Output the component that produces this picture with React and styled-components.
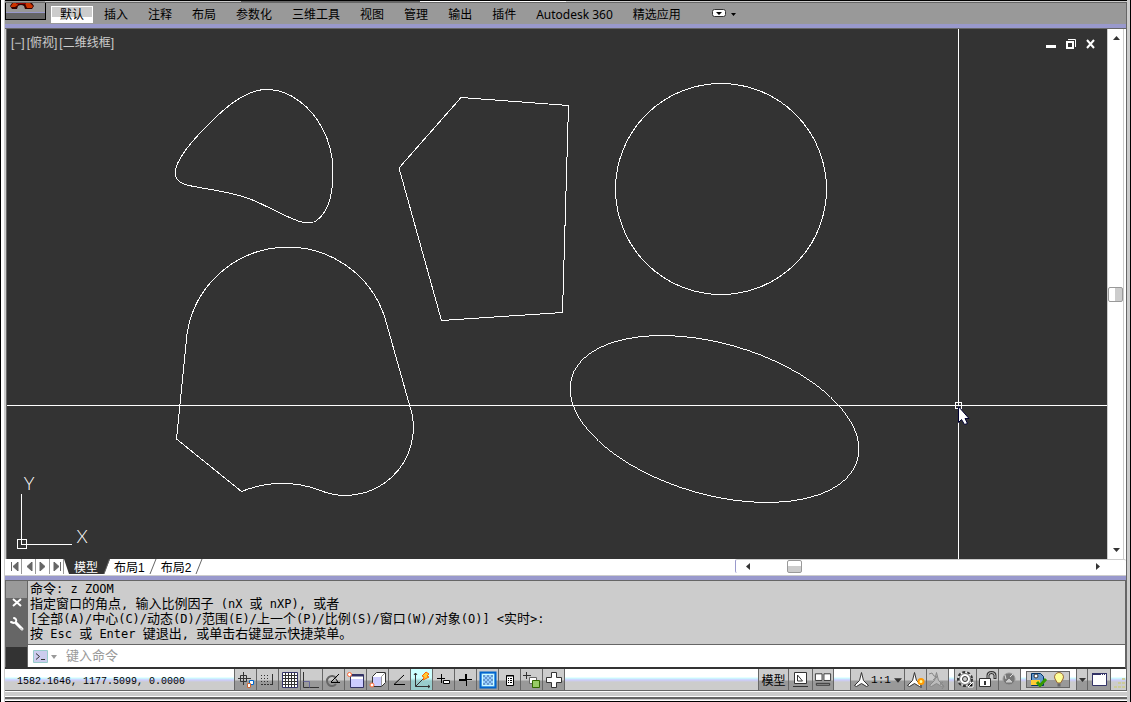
import { useState } from "react";
import styled, { createGlobalStyle } from "styled-components";

const GlobalStyle = createGlobalStyle`
  * {
    box-sizing: border-box;
  }
  body {
    margin: 0;
    background: #ccc;
    font-family: "Noto Sans", "Noto Sans CJK SC", sans-serif;
    font-size: 12px;
    color: #000;
  }
  button {
    border: none;
    padding: 0;
    margin: 0;
    background: transparent;
    font: inherit;
    color: inherit;
    cursor: pointer;
  }
  svg {
    display: block;
  }
`;

const Frame = styled.div`
  display: flex;
  flex-direction: column;
  min-height: 100vh;
  border-left: 1px solid #000;
  border-right: 1px solid #000;
  padding: 0 3px 0 4px;
  background: linear-gradient(to right, #fff 3px, #ccc 3px);
`;

const TopEdge = styled.div`
  height: 3px;
  border-top: 1px solid #000;
  border-bottom: 1px solid #666;
  background: linear-gradient(
    to right,
    #999 40px,
    #ccc 40px,
    #ccc 21%,
    #666 21%,
    #666 37%,
    #fff 37%,
    #fff 50%,
    #ccc 50%
  );
`;

const Shell = styled.div`
  flex: 1;
  display: flex;
  flex-direction: column;
  border-right: 1px solid #666;
`;

const Ribbon = styled.header`
  display: flex;
  align-items: flex-start;
  height: 21px;
  background: #999;
`;

const AppButton = styled.button`
  display: flex;
  align-items: flex-start;
  width: 41px;
  height: 17px;
  margin-right: 4px;
  border: 1px solid #000;
  border-top: none;
  background: linear-gradient(#999 9px, #99c 9px, #99c 10px, #666 10px);
`;

const RibbonTabs = styled.nav`
  display: flex;
  padding-top: 3px;
`;

const RibbonTab = styled.button`
  height: 17px;
  padding: 0 10px;
  line-height: 16px;
  white-space: nowrap;
  background: ${(props) =>
    props.$active ? "linear-gradient(#ccc 10px, #fff 10px)" : "transparent"};
  &:first-child {
    border: 1px solid #fff;
    padding: 0 8px;
    line-height: 14px;
    margin: 0 1px;
  }
`;

const RibbonToggle = styled.button`
  margin: 5px 0 0 20px;
`;

const LilacBar = styled.div`
  height: 5px;
  background: #99c;
  border-bottom: 1px solid #666;
`;

const Workspace = styled.div`
  flex: 1;
  display: flex;
  min-height: 320px;
  padding-left: 1px;
`;

const Viewport = styled.main`
  position: relative;
  flex: 1;
  display: flex;
  min-width: 0;
  border-left: 1px solid #666;
  background: #333;
  cursor: none;
`;

const Drawing = styled.svg`
  flex: 1;
  min-width: 0;
  fill: none;
  stroke: #fff;
  shape-rendering: crispEdges;
`;

const AxisLabel = styled.text`
  font-family: Lato, sans-serif;
  font-weight: 300;
  font-size: 18px;
  fill: #fff;
  stroke: none;
  text-anchor: middle;
`;

const ViewportControls = styled.div`
  position: absolute;
  top: 6px;
  left: 4px;
  display: flex;
  gap: 2px;
  color: #ccc;
  font-family: "Liberation Sans", "Noto Sans CJK SC", sans-serif;
  line-height: 16px;
`;

const WindowControls = styled.div`
  position: absolute;
  top: 9px;
  right: 10px;
  display: flex;
  gap: 8px;
`;

const VerticalScroll = styled.div`
  display: flex;
  flex-direction: column;
  align-items: flex-start;
  justify-content: space-between;
  width: 19px;
  padding: 6px 0;
  border-left: 1px solid #ccc;
  background: linear-gradient(to right, #fff 15px, #ccc 15px, #ccc 16px, #fff 16px);
`;

const VerticalArrow = styled.button`
  padding-left: 5px;
`;

const VerticalThumb = styled.div`
  width: 15px;
  height: 15px;
  border: 1px solid #999;
  border-radius: 2px;
  background: linear-gradient(to right, #fff 6px, #ccc 6px);
`;

const LayoutBar = styled.div`
  display: flex;
  height: 17px;
  padding-left: 3px;
  border-bottom: 1px solid #ccc;
  background: #fff;
`;

const PageButton = styled.button`
  display: flex;
  align-items: center;
  justify-content: center;
  width: 14px;
  height: 15px;
  border-right: 1px solid #999;
`;

const LayoutTabs = styled.div`
  display: flex;
  height: 15px;
`;

const LayoutTab = styled.button`
  height: 15px;
  line-height: 16px;
  padding: 1px 4px 0;
  white-space: nowrap;
  font-family: "Liberation Sans", "Noto Sans CJK SC", sans-serif;
  color: ${(props) => (props.$active ? "#fff" : "#000")};
  background: ${(props) => (props.$active ? "#333" : "#fff")};
`;

const HorizontalScroll = styled.div`
  display: flex;
  align-items: center;
  width: 35%;
  height: 14px;
  margin-left: auto;
  padding: 0 25px 0 9px;
  border-left: 1px solid #99c;
  border-radius: 2px;
  border-top: 1px solid #ccc;
`;

const HorizontalThumb = styled.div`
  width: 15px;
  height: 13px;
  margin: 0 auto 0 35px;
  border: 1px solid #999;
  border-radius: 2px;
  background: linear-gradient(#fff 5px, #ccc 5px);
`;

const CommandPanel = styled.section`
  display: flex;
  border-right: 1px solid #666;
  border-bottom: 2px solid #333;
`;

const CommandGrip = styled.div`
  display: flex;
  flex-direction: column;
  align-items: center;
  width: 23px;
  padding-top: 17px;
  border: 1px solid #666;
  border-top: none;
  border-bottom: none;
  background: linear-gradient(#999 17px, #666 17px, #666 66px, #333 66px);
`;

const GripButton = styled.button`
  padding-bottom: 8px;
`;

const CommandBody = styled.div`
  flex: 1;
  min-width: 0;
`;

const CommandHistory = styled.div`
  height: 64px;
  padding: 1px 0 0 2px;
  border-bottom: 1px solid #666;
  background: #ccc;
  overflow: hidden;
`;

const HistoryLine = styled.p`
  margin: 0;
  font-family: "Liberation Mono", "Noto Sans CJK SC", monospace;
  font-size: 13px;
  line-height: 15px;
  height: 15px;
  white-space: pre;
`;

const Latin = styled.span`
  font-family: "DejaVu Sans Mono", monospace;
  font-size: 12px;
  line-height: 14px;
`;

const PromptRow = styled.label`
  display: flex;
  align-items: center;
  height: 22px;
  padding-left: 5px;
  background: #fff;
`;

const PromptInput = styled.input`
  flex: 1;
  min-width: 0;
  height: 20px;
  margin-left: 9px;
  padding: 0 0 2px;
  border: none;
  outline: none;
  background: transparent;
  font-family: "DejaVu Sans Mono", "Noto Sans CJK SC", monospace;
  font-size: 13px;
  &::placeholder {
    color: #999;
    opacity: 1;
  }
`;

const StatusBar = styled.footer`
  display: flex;
  height: 22px;
  border-bottom: 1px solid #666;
  background: linear-gradient(#fff 8px, #cff 9px, #ccf 11px, #ccc 13px);
`;

const Coordinates = styled.output`
  width: 230px;
  padding-left: 12px;
  border-right: 1px solid #666;
  font-family: "Liberation Mono", monospace;
  font-size: 10px;
  line-height: 26px;
  white-space: nowrap;
`;

const StatusButton = styled.button`
  display: flex;
  align-items: center;
  justify-content: center;
  flex: none;
  width: ${(props) => props.$width || 22}px;
  height: 21px;
  border-right: 1px solid #666;
  white-space: nowrap;
  background: ${(props) =>
    props.$on
      ? "linear-gradient(#cff 9px, #9cc 12px)"
      : "linear-gradient(#ccc 11px, #999 12px)"};
`;

const ScaleText = styled.span`
  margin: 0 3px 0 1px;
  font-family: "Liberation Mono", monospace;
  font-size: 11px;
`;

const StatusSpacer = styled.div`
  flex: ${(props) => (props.$width ? "none" : 1)};
  width: ${(props) => props.$width || 0}px;
  border-right: 1px solid #666;
`;

const Tray = styled.div`
  display: flex;
  align-items: center;
  width: 56px;
  padding-left: 5px;
  border-right: 1px solid #666;
`;

const TrayInner = styled.div`
  display: flex;
  gap: 4px;
  width: 44px;
  height: 17px;
  padding: 0 3px;
  border: 1px solid #666;
  background: linear-gradient(#ccc 8px, #999 8px);
`;

const BottomEdge = styled.div`
  height: 11px;
  border-bottom: 1px solid #000;
  background: linear-gradient(
    #fff 1px,
    #ccc 1px,
    #ccc 5px,
    #fff 5px,
    #fff 6px,
    #666 6px,
    #666 8px,
    #ccc 8px,
    #ccc 9px,
    #fff 9px
  );
`;

const Icon = ({ children, width = 21, height = 20, ...rest }) => (
  <svg
    width={width}
    height={height}
    viewBox={`0 0 ${width} ${height}`}
    fill="none"
    stroke="#333"
    aria-hidden="true"
    {...rest}
  >
    {children}
  </svg>
);

const arrowShapes = {
  up: "M0 5h7L3.5 1z",
  down: "M0 2h7L3.5 6z",
  left: "M5 0v7L1 3.5z",
  right: "M2 0v7l4-3.5z",
};

const Arrow = ({ dir, size = 7 }) => (
  <svg width={size} height={size} viewBox="0 0 7 7" aria-hidden="true">
    <path d={arrowShapes[dir]} fill="#333" />
  </svg>
);

const ribbonTabs = [
  "默认", "插入", "注释", "布局", "参数化", "三维工具",
  "视图", "管理", "输出", "插件", "Autodesk 360", "精选应用",
];

const history = [
  "命令: z ZOOM",
  "指定窗口的角点, 输入比例因子 (nX 或 nXP), 或者",
  "[全部(A)/中心(C)/动态(D)/范围(E)/上一个(P)/比例(S)/窗口(W)/对象(O)] <实时>:",
  "按 Esc 或 Enter 键退出, 或单击右键显示快捷菜单。",
];

const pageIcons = [
  { label: "第一个", path: "M1.5 0v9M8 0v9L3 4.5z" },
  { label: "上一个", path: "M8 0v9L3 4.5z" },
  { label: "下一个", path: "M2 0v9l5-4.5z" },
  { label: "最后一个", path: "M2 0v9l5-4.5zM8.5 0v9" },
];

const drawingAids = [
  {
    label: "推断约束",
    icon: (
      <>
        <path d="M3 8.5h13M8.5 2v13M5.5 5.5h6v6h-6z" />
        <path d="M14.5 10.5h4v4h-4z" stroke="#06c" fill="#fff" />
        <path d="M12.5 13.5h3v4h-3z" stroke="#c63" fill="#fff" />
      </>
    ),
  },
  {
    label: "捕捉模式",
    icon: (
      <>
        <path d="M4 5.5h9M4 8.5h9M4 11.5h9" strokeDasharray="1 2" />
        <path d="M4 14.5h11" strokeDasharray="2 1" />
        <path d="M15.5 4v11" />
      </>
    ),
  },
  {
    label: "栅格显示",
    icon: (
      <>
        <path d="M3.5 2.5h15v15h-15z" fill="#fff" stroke="#336" />
        <path d="M6.5 3v14M9.5 3v14M12.5 3v14M15.5 3v14M4 5.5h14M4 8.5h14M4 11.5h14M4 14.5h14" />
      </>
    ),
  },
  {
    label: "正交模式",
    icon: (
      <>
        <path d="M2.5 2v15.5H18" />
        <path d="M2.5 11.5h6v6" stroke="#669" />
      </>
    ),
  },
  {
    label: "极轴追踪",
    icon: (
      <>
        <path d="M13 8a5 5 0 1 0 0 6" stroke="#666" strokeWidth="2" />
        <path d="M8 12.5h9M8 12l8-8M12.5 9q2 1 2 3" stroke="#000" />
      </>
    ),
  },
  {
    label: "对象捕捉",
    icon: (
      <>
        <path d="M5.5 4.5h13v13h-13z" fill="#ccf" stroke="#336" />
        <path d="M6 5h12v4H6z" fill="#fff" stroke="none" />
        <path d="M5 5.5h13" stroke="#336" strokeWidth="2" />
        <circle cx="4.5" cy="4.5" r="2" fill="#fff" stroke="#f63" />
      </>
    ),
  },
  {
    label: "三维对象捕捉",
    icon: (
      <>
        <path d="M5.5 6.5l4-4h9v10l-4 4h-9z" fill="#fff" />
        <path d="M6 7h8v9H6z" fill="#ccf" stroke="none" />
        <path d="M14.5 16V6.5l4-4" stroke="#999" />
        <circle cx="5" cy="15" r="2" fill="#fff" stroke="#f63" />
      </>
    ),
  },
  {
    label: "对象捕捉追踪",
    icon: <path d="M15 5L5 14.5h11" stroke="#000" />,
  },
  {
    label: "允许/禁止动态 UCS",
    on: true,
    icon: (
      <>
        <path d="M4.5 3v13.5H19M3 5l1.5-2L6 5M17 15l2 1.5-2 1.5M4.5 16.5L13 8" />
        <path d="M15 2l3 2-2 2 2 1-6 3 1-3-2-1z" fill="#fc3" stroke="#f60" />
      </>
    ),
  },
  {
    label: "动态输入",
    icon: (
      <>
        <path d="M4 8.5h8M8.5 4v9" stroke="#000" />
        <path d="M10.5 10.5h6v3h-6z" fill="#fff" stroke="#000" />
      </>
    ),
  },
  {
    label: "显示/隐藏线宽",
    icon: (
      <>
        <path d="M4 10h8M11 10V4" stroke="#000" strokeWidth="2" />
        <path d="M11.5 9v7M11 9.5h6" stroke="#000" />
      </>
    ),
  },
  {
    label: "显示/隐藏透明度",
    icon: (
      <>
        <path d="M3.5 2.5h15v15h-15z" fill="#9cf" stroke="#06c" strokeWidth="2" />
        <path d="M5.5 4.5h11v11h-11z" stroke="#cff" />
        <path
          d="M6 6h10M8 8h8M6 10h10M8 12h8M6 14h10"
          stroke="#69c"
          strokeWidth="2"
          strokeDasharray="2 2"
        />
      </>
    ),
  },
  {
    label: "快捷特性",
    icon: (
      <>
        <path d="M7.5 5.5h7v10h-7z" fill="#fff" stroke="#000" />
        <path d="M7 6h8M9 8.5h1M11 8.5h2M9 10.5h1M11 10.5h2M9 12.5h1M11 12.5h2" stroke="#000" />
      </>
    ),
  },
  {
    label: "选择循环",
    icon: (
      <>
        <path d="M2 5.5h8M5.5 2v7" />
        <path d="M8.5 7.5h7v6h-7z" fill="#fff" stroke="#666" />
        <path d="M11.5 10.5h7v7h-7z" fill="#9c6" stroke="#360" />
      </>
    ),
  },
  {
    label: "注释监视器",
    icon: <path d="M8.5 2.5h5v5h5v5h-5v5h-5v-5h-5v-5h5z" fill="#fff" />,
  },
];

const compassPath = "M8.5 1.5l2 8 5 5-2 1-5-3-5 3-2-1 5-5z";

// full-width glyphs are 13px, latin runs sit on the mono grid
const CommandLine = ({ text }) => (
  <HistoryLine>
    {text
      .split(/([\x20-\x7e]+)/)
      .filter(Boolean)
      .map((part, i) =>
        /^[\x20-\x7e]/.test(part) ? <Latin key={i}>{part}</Latin> : part
      )}
  </HistoryLine>
);

const ModelSpace = () => (
  <Drawing>
    <path d="M168.5 143C168.5 130 187 109 209 88C226 72 243 60 261 60.5C283 60.5 305 79 315 99C323 113 326 128 326 143C326 163 322 177 316 185C311 192 307 194 301 194C290 194 270 182 248 172C226 162 195 160 180 156C171 153 168 150 168.5 143z" />
    <path d="M454 68.500L561.500 76.500L555.500 283.500L434.500 291.500L392 139z" />
    <circle cx="714" cy="160" r="105.5" />
    <path d="M234.5 462.5L169.500 410L180 305A102 102 0 0 1 378 289L402.5 376A67.8 67.8 0 0 1 311 460.500A110 110 0 0 0 234.5 462.5z" />
    <ellipse
      cx="707.5"
      cy="390"
      rx="148.8"
      ry="75.5"
      transform="rotate(16.1 707.5 390)"
    />
    <path d="M14.5 465v50.5H65M10.5 510.5h9v9h-9z" />
    <AxisLabel x="22" y="461">Y</AxisLabel>
    <AxisLabel x="75" y="514">X</AxisLabel>

    {/* crosshair with pickbox */}
    <line x1="951.5" y1="0" x2="951.5" y2="100%" />
    <line x1="0" y1="376.5" x2="100%" y2="376.5" />
    <path d="M948.5 373.5h6v6h-6z" />
    <path
      d="M951.5 377.5v16l3-3 3 5 3-1-2.5-5h4z"
      fill="#fff"
      stroke="#003"
      shapeRendering="auto"
    />
  </Drawing>
);

const App = () => {
  const [tab, setTab] = useState(0);
  const [layout, setLayout] = useState(0);

  return (
    <>
      <GlobalStyle />
      <Frame>
        <TopEdge />
        <Shell>
          <Ribbon>
            <AppButton aria-label="应用程序菜单">
              <Icon width={39} height={8} stroke="none">
                <path
                  d="M6 0h20l2 3-2 3h-7l-1-3Q15 1 12 3l-1 3H6L4 3z"
                  fill="#300"
                />
                <path d="M7 0h4l1 2-3 2H5V3zM19 0h5l3 3-1 2h-5l-1-2z" fill="#c30" />
                <path d="M10 0h10v1H10z" fill="#900" />
              </Icon>
            </AppButton>
            <RibbonTabs>
              {ribbonTabs.map((name, i) => (
                <RibbonTab key={name} $active={i === tab} onClick={() => setTab(i)}>
                  {name}
                </RibbonTab>
              ))}
            </RibbonTabs>
            <RibbonToggle aria-label="最小化功能区">
              <Icon width={26} height={10}>
                <rect x="1.5" y="1.5" width="13" height="7" rx="2" fill="#fff" />
                <path d="M5 4h6L8 7zM20 5h5l-2.5 3z" fill="#000" stroke="none" />
              </Icon>
            </RibbonToggle>
          </Ribbon>
          <LilacBar />

          <Workspace>
            <Viewport>
              <ModelSpace />
              <ViewportControls>
                <button>[−]</button>
                <button>[俯视]</button>
                <button>[二维线框]</button>
              </ViewportControls>
              <WindowControls>
                <button aria-label="最小化">
                  <Icon width={12} height={12} stroke="none">
                    <path d="M1 7h10v3H1z" fill="#fff" />
                  </Icon>
                </button>
                <button aria-label="还原">
                  <Icon width={12} height={12} stroke="#fff">
                    <path d="M3 1.5h7.5V9" />
                    <path d="M2 4h6v6H2z" strokeWidth="2" />
                  </Icon>
                </button>
                <button aria-label="关闭">
                  <Icon width={12} height={12} stroke="#fff">
                    <path d="M2 2l7 8M9 2l-7 8" strokeWidth="2" />
                  </Icon>
                </button>
              </WindowControls>
            </Viewport>
            <VerticalScroll>
              <VerticalArrow aria-label="向上滚动">
                <Arrow dir="up" />
              </VerticalArrow>
              <VerticalThumb />
              <VerticalArrow aria-label="向下滚动">
                <Arrow dir="down" />
              </VerticalArrow>
            </VerticalScroll>
          </Workspace>

          <LayoutBar>
            {pageIcons.map((item) => (
              <PageButton key={item.label} aria-label={item.label}>
                <Icon width={10} height={9} stroke="#666">
                  <path d={item.path} fill="#666" />
                </Icon>
              </PageButton>
            ))}
            <LayoutTabs>
              <Icon width={6} height={15} stroke="none">
                <path d="M0 0h6v15h-1z" fill="#333" />
              </Icon>
              <LayoutTab $active={layout === 0} onClick={() => setLayout(0)}>
                模型
              </LayoutTab>
              <Icon width={8} height={15} stroke="#666">
                <path d="M0 0h8L2 15H0z" fill="#333" stroke="none" />
                <path d="M7.5 0L2 15" />
              </Icon>
              <LayoutTab $active={layout === 1} onClick={() => setLayout(1)}>
                布局1
              </LayoutTab>
              <Icon width={8} height={15} stroke="#666">
                <path d="M7 0L1 15" />
              </Icon>
              <LayoutTab $active={layout === 2} onClick={() => setLayout(2)}>
                布局2
              </LayoutTab>
              <Icon width={8} height={15} stroke="#666">
                <path d="M7 0L1 15" />
              </Icon>
            </LayoutTabs>
            <HorizontalScroll>
              <button aria-label="向左滚动">
                <Arrow dir="left" />
              </button>
              <HorizontalThumb />
              <button aria-label="向右滚动">
                <Arrow dir="right" />
              </button>
            </HorizontalScroll>
          </LayoutBar>
          <LilacBar />

          <CommandPanel>
            <CommandGrip>
              <GripButton aria-label="关闭命令行">
                <Icon width={12} height={10} stroke="#fff">
                  <path d="M2 1l8 7M10 1L2 8" strokeWidth="2" />
                </Icon>
              </GripButton>
              <GripButton aria-label="自定义">
                <Icon width={16} height={16} stroke="#fff">
                  <path
                    d="M5 2q3 1 2 3.500T2 6"
                    strokeWidth="2"
                    strokeLinecap="round"
                  />
                  <path d="M7 7l6 6" strokeWidth="3" strokeLinecap="round" />
                  <path d="M12 12.5l1 1" stroke="#666" />
                </Icon>
              </GripButton>
            </CommandGrip>
            <CommandBody>
              <CommandHistory>
                {history.map((text) => (
                  <CommandLine key={text} text={text} />
                ))}
              </CommandHistory>
              <PromptRow>
                <Icon width={24} height={16}>
                  <path d="M.5 2.5h14v12H.5z" fill="#cce" stroke="#9cc" />
                  <path d="M3 5.500l3.500 3L3 11.500M8 11.500h4" />
                  <path d="M18 7h6l-3 4z" fill="#999" stroke="none" />
                </Icon>
                <PromptInput placeholder="键入命令" aria-label="键入命令" />
              </PromptRow>
            </CommandBody>
          </CommandPanel>

          <StatusBar>
            <Coordinates>1582.1646, 1177.5099, 0.0000</Coordinates>
            {drawingAids.map((aid) => (
              <StatusButton key={aid.label} $on={aid.on} aria-label={aid.label}>
                <Icon>{aid.icon}</Icon>
              </StatusButton>
            ))}
            <StatusSpacer />
            <StatusButton $width={30}>模型</StatusButton>
            <StatusButton $width={24} aria-label="快速查看布局">
              <Icon>
                <path d="M4.5 2.5h12v11h-12z" fill="#fff" />
                <path d="M7.5 5v6h5zM3 16.5h15" />
              </Icon>
            </StatusButton>
            <StatusButton $width={21} aria-label="快速查看图形">
              <Icon>
                <path d="M2.5 3.5h7v7h-7zM11.5 3.5h7v7h-7z" fill="#fff" />
                <path d="M3.5 13.5h14v2h-14z" fill="#999" />
              </Icon>
            </StatusButton>
            <StatusSpacer $width={17} />
            <StatusButton $width={54}>
              <Icon width={17} height={18}>
                <path d={compassPath} fill="#fff" />
              </Icon>
              <ScaleText>1:1</ScaleText>
              <Arrow dir="down" size={8} />
            </StatusButton>
            <StatusButton aria-label="注释可见性">
              <Icon width={20} height={18}>
                <path d={compassPath} fill="#fff" />
                <circle cx="15" cy="10.5" r="2.5" fill="#ff9" stroke="#f90" strokeWidth="2" />
                <path d="M15 14v3" stroke="#666" strokeWidth="2" />
              </Icon>
            </StatusButton>
            <StatusButton aria-label="自动添加比例">
              <Icon width={20} height={18} stroke="#888">
                <path d={compassPath} fill="#bbb" />
                <path d="M1 3l3-1 2 3 3 1-4 3" />
                <path d="M15 11l-3 2 4 2-2 3" />
              </Icon>
            </StatusButton>
            <StatusSpacer $width={6} />
            <StatusButton aria-label="切换工作空间">
              <Icon>
                <circle cx="10" cy="9" r="7" fill="#fff" strokeWidth="2" strokeDasharray="3 2" />
                <circle cx="10" cy="9" r="5.500" fill="#fff" stroke="#666" />
                <circle cx="10" cy="9" r="2.500" fill="#ccc" />
                <path d="M18 12v5h-5z" fill="#000" stroke="#fff" />
              </Icon>
            </StatusButton>
            <StatusButton aria-label="锁定">
              <Icon>
                <path d="M2.5 8.5h11v8h-11z" fill="#fff" />
                <path d="M8 11v4" strokeWidth="2" />
                <path d="M11 8V5.500q0-3 3.500-3t3.500 3V9" strokeWidth="3" />
                <path d="M11 8V5.500q0-3 3.500-3t3.500 3V8" stroke="#ccc" />
              </Icon>
            </StatusButton>
            <StatusButton aria-label="硬件加速">
              <Icon>
                <circle cx="10" cy="9" r="6" fill="#777" stroke="#999" />
                <path d="M7 9L6 5M11 7l3-3" stroke="#ddd" />
                <path d="M7 12l3-3 3 3z" fill="#ccc" stroke="#ccc" />
              </Icon>
            </StatusButton>
            <Tray>
              <TrayInner>
                <Icon width={18} height={15}>
                  <path d="M1.5 1.5h9l3 3v9h-12z" fill="#69c" stroke="#036" />
                  <path d="M1 8h9v5H1z" fill="#fc3" stroke="none" />
                  <circle cx="6" cy="4" r="2" fill="#fff" />
                  <path d="M7 10l3 3.500L16 7" stroke="#390" strokeWidth="3" />
                </Icon>
                <Icon width={14} height={15} stroke="#963">
                  <path
                    d="M7 .5a4.500 4.500 0 0 1 4 6.500l-2.500 4h-3L3 7A4.500 4.500 0 0 1 7 .5z"
                    fill="#ff9"
                  />
                  <path d="M5.5 13h3" stroke="#666" strokeWidth="3" />
                </Icon>
              </TrayInner>
            </Tray>
            <StatusButton $width={11} aria-label="状态栏菜单">
              <Arrow dir="down" />
            </StatusButton>
            <StatusButton $width={23} aria-label="全屏显示">
              <Icon>
                <path d="M3.5 3.5h14v12h-14z" fill="#fff" stroke="#336" />
                <path d="M3 4h15" stroke="#336" strokeWidth="2" />
                <path d="M12 4.5h5" stroke="#fff" strokeDasharray="1 1" />
              </Icon>
            </StatusButton>
            <Icon width={15} height={21} stroke="#cc9">
              <path
                d="M11 10h3M7 14h3M11 14h3M3 18h3M7 18h3M11 18h3"
                strokeWidth="2"
              />
            </Icon>
          </StatusBar>
        </Shell>
        <BottomEdge />
      </Frame>
    </>
  );
};

export default App;
